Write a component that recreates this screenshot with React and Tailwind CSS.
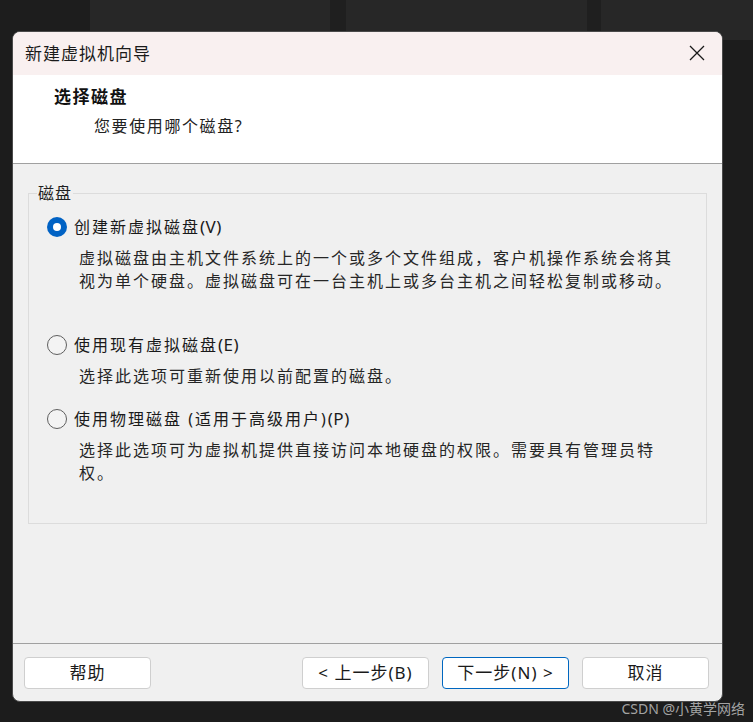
import React from "react";

const FONT = { fontFamily: '"Noto Sans", "Noto Sans CJK SC", sans-serif' };

function Radio({ checked }) {
  if (checked) {
    return (
      <span className="flex h-[20px] w-[20px] shrink-0 items-center justify-center rounded-full bg-[#0062c4]">
        <span className="block h-[8px] w-[8px] rounded-full bg-white" />
      </span>
    );
  }
  return <span className="block h-[20px] w-[20px] shrink-0 rounded-full border border-[#5f5f5f] bg-[#f3f3f3]" />;
}

function Option({ checked, label, children, className }) {
  return (
    <div className={className}>
      <div className="flex h-[24px] items-center">
        <span className="ml-[18px] block">
          <Radio checked={checked} />
        </span>
        <span className="ml-[7px] text-[16px] leading-[24px] tracking-[2px] text-[#1a1a1a]">{label}</span>
      </div>
      <div className="ml-[50px] mt-[8px] w-[600px] text-[16px] leading-[23px] tracking-[2px] text-[#262626]">
        {children}
      </div>
    </div>
  );
}

function Button({ children, primary }) {
  return (
    <button
      className={
        "flex h-[32px] w-[127px] items-center justify-center rounded-[4px] bg-white text-[17px] tracking-[1px] text-[#1a1a1a] " +
        (primary ? "border border-[#0067c0]" : "border border-[#cfcfcf]")
      }
    >
      {children}
    </button>
  );
}

export default function App() {
  return (
    <div className="relative h-[722px] w-[753px] overflow-hidden bg-[#1c1c1c]" style={FONT}>
      {/* background tiles */}
      <div className="flex h-[40px]">
        <div className="w-[90px] bg-[#1d1d1d]" />
        <div className="w-[240px] bg-[#272727]" />
        <div className="w-[16px] bg-[#1f1f1f]" />
        <div className="w-[241px] bg-[#272727]" />
        <div className="w-[14px] bg-[#1f1f1f]" />
        <div className="flex-1 bg-[#272727]" />
      </div>

      {/* dialog */}
      <div className="relative ml-[12px] mt-[-9px] w-[711px] overflow-hidden rounded-[8px] border border-[#4a4a4a] bg-[#f0f0f0]">
        {/* title bar */}
        <div className="flex h-[43px] items-center justify-between bg-[#f9f0f0] pl-[12px] pr-[16px]">
          <span className="text-[17px] tracking-[1px] text-[#1a1a1a]">新建虚拟机向导</span>
          <svg width="16" height="16" viewBox="0 0 16 16" className="mb-[2px] mr-[1px]">
            <path d="M1 1 L15 15 M15 1 L1 15" stroke="#1a1a1a" strokeWidth="1.3" fill="none" />
          </svg>
        </div>

        {/* header */}
        <div className="h-[88px] bg-white pt-[11px]">
          <div className="ml-[41px] text-[17px] font-bold leading-[22px] tracking-[1.5px] text-[#111]">选择磁盘</div>
          <div className="ml-[81px] mt-[7px] text-[16px] leading-[22px] tracking-[1.6px] text-[#222]">您要使用哪个磁盘?</div>
        </div>
        <div className="h-[1px] bg-[#a0a0a0]" />

        {/* content */}
        <div className="h-[479px] px-[15px] pt-[19px]">
          <fieldset className="h-[341px] border border-[#dcdcdc] px-0 pt-[12px]">
            <legend className="ml-[8px] px-[1px] text-[16px] leading-[20px] tracking-[1px] text-[#1f1f1f]">磁盘</legend>
            <Option checked label={<>创建新虚拟磁盘<span className="text-[17px] tracking-[0.5px]">(V)</span></>}>
              虚拟磁盘由主机文件系统上的一个或多个文件组成，客户机操作系统会将其视为单个硬盘。虚拟磁盘可在一台主机上或多台主机之间轻松复制或移动。
            </Option>
            <Option className="mt-[40px]" label={<>使用现有虚拟磁盘<span className="text-[17px] tracking-[0.5px]">(E)</span></>}>
              选择此选项可重新使用以前配置的磁盘。
            </Option>
            <Option className="mt-[19px]" label={<>使用物理磁盘 (适用于高级用户)<span className="text-[17px] tracking-[0.5px]">(P)</span></>}>
              选择此选项可为虚拟机提供直接访问本地硬盘的权限。需要具有管理员特权。
            </Option>
          </fieldset>
        </div>
        <div className="h-[1px] bg-[#a0a0a0]" />

        {/* footer */}
        <div className="flex h-[57px] items-center pl-[11px] pr-[13px]">
          <Button>帮助</Button>
          <div className="flex-1" />
          <div className="flex gap-[13px]">
            <Button>&lt; 上一步(B)</Button>
            <Button primary>下一步(N) &gt;</Button>
            <Button>取消</Button>
          </div>
        </div>
      </div>

      {/* watermark */}
      <div className="absolute bottom-[5px] right-[8px] text-[14px] leading-[16px] text-[#a3a3a3]">CSDN @小黄学网络</div>
    </div>
  );
}
